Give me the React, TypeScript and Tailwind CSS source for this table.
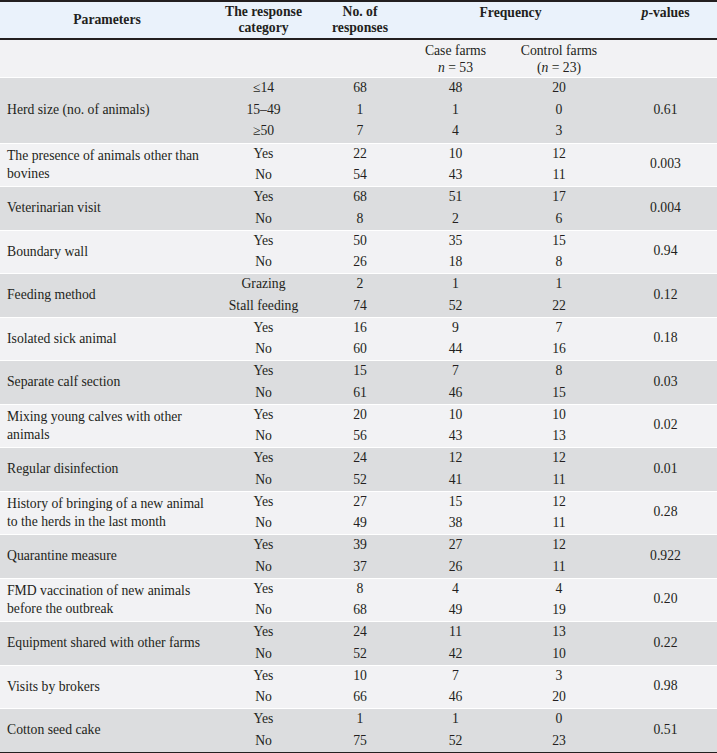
type Group = {
  param: string[];
  rows: string[][];
  p: string;
};

const groups: Group[] = [
  {
    param: ['Herd size (no. of animals)'],
    rows: [
      ['≤14', '68', '48', '20'],
      ['15–49', '1', '1', '0'],
      ['≥50', '7', '4', '3']
    ],
    p: '0.61'
  },
  {
    param: ['The presence of animals other than', 'bovines'],
    rows: [
      ['Yes', '22', '10', '12'],
      ['No', '54', '43', '11']
    ],
    p: '0.003'
  },
  {
    param: ['Veterinarian visit'],
    rows: [
      ['Yes', '68', '51', '17'],
      ['No', '8', '2', '6']
    ],
    p: '0.004'
  },
  {
    param: ['Boundary wall'],
    rows: [
      ['Yes', '50', '35', '15'],
      ['No', '26', '18', '8']
    ],
    p: '0.94'
  },
  {
    param: ['Feeding method'],
    rows: [
      ['Grazing', '2', '1', '1'],
      ['Stall feeding', '74', '52', '22']
    ],
    p: '0.12'
  },
  {
    param: ['Isolated sick animal'],
    rows: [
      ['Yes', '16', '9', '7'],
      ['No', '60', '44', '16']
    ],
    p: '0.18'
  },
  {
    param: ['Separate calf section'],
    rows: [
      ['Yes', '15', '7', '8'],
      ['No', '61', '46', '15']
    ],
    p: '0.03'
  },
  {
    param: ['Mixing young calves with other', 'animals'],
    rows: [
      ['Yes', '20', '10', '10'],
      ['No', '56', '43', '13']
    ],
    p: '0.02'
  },
  {
    param: ['Regular disinfection'],
    rows: [
      ['Yes', '24', '12', '12'],
      ['No', '52', '41', '11']
    ],
    p: '0.01'
  },
  {
    param: ['History of bringing of a new animal', 'to the herds in the last month'],
    rows: [
      ['Yes', '27', '15', '12'],
      ['No', '49', '38', '11']
    ],
    p: '0.28'
  },
  {
    param: ['Quarantine measure'],
    rows: [
      ['Yes', '39', '27', '12'],
      ['No', '37', '26', '11']
    ],
    p: '0.922'
  },
  {
    param: ['FMD vaccination of new animals', 'before the outbreak'],
    rows: [
      ['Yes', '8', '4', '4'],
      ['No', '68', '49', '19']
    ],
    p: '0.20'
  },
  {
    param: ['Equipment shared with other farms'],
    rows: [
      ['Yes', '24', '11', '13'],
      ['No', '52', '42', '10']
    ],
    p: '0.22'
  },
  {
    param: ['Visits by brokers'],
    rows: [
      ['Yes', '10', '7', '3'],
      ['No', '66', '46', '20']
    ],
    p: '0.98'
  },
  {
    param: ['Cotton seed cake'],
    rows: [
      ['Yes', '1', '1', '0'],
      ['No', '75', '52', '23']
    ],
    p: '0.51'
  }
];

const cols = 'grid grid-cols-[214px_99px_94px_97px_110px_103px]';

function GroupRows({ group, dark }: { group: Group; dark: boolean }) {
  const three = group.rows.length === 3;
  const rowH = three ? 'h-[21.5px]' : 'h-[21.25px]';
  return (
    <div className={`${cols} border-t border-white ${dark ? 'bg-[#dcdddf]' : 'bg-[#f2f2f4]'}`}>
      <div
        className={`col-start-1 row-start-1 flex flex-col justify-center pl-[7px] leading-[18px] ${
          three ? 'row-span-3' : 'row-span-2'
        }`}
      >
        {group.param.map((line) => (
          <span key={line}>{line}</span>
        ))}
      </div>
      {group.rows.map((row, i) =>
        row.map((cell, j) => (
          <div
            key={`${i}-${j}`}
            className={`${rowH} flex items-center justify-center`}
            style={{ gridColumnStart: j + 2, gridRowStart: i + 1 }}
          >
            {cell}
          </div>
        ))
      )}
      <div
        className={`col-start-6 row-start-1 flex items-center justify-center ${three ? 'row-span-3' : 'row-span-2'}`}
      >
        {group.p}
      </div>
    </div>
  );
}

export default function App() {
  return (
    <div className="w-[717px] h-[753px] overflow-hidden bg-white font-['Liberation_Serif',serif] text-[13.7px] text-[#231f20]">
      <div className="border-t-2 border-b-2 border-[#231f20]">
        <div className={`${cols} h-[36px] bg-[#eaf2fb] font-bold leading-[16px]`}>
          <div className="flex items-center justify-center">Parameters</div>
          <div className="flex flex-col items-center justify-center">
            <span>The response</span>
            <span>category</span>
          </div>
          <div className="flex flex-col items-center justify-center">
            <span>No. of</span>
            <span>responses</span>
          </div>
          <div className="col-span-2 pt-[3px] text-center">Frequency</div>
          <div className="pt-[3px] text-center">
            <i>p</i>-values
          </div>
        </div>
      </div>
      <div className={`${cols} h-[37px] bg-[#f2f2f4] leading-[17px]`}>
        <div />
        <div />
        <div />
        <div className="flex flex-col items-center justify-center">
          <span>Case farms</span>
          <span>
            <i>n</i> = 53
          </span>
        </div>
        <div className="flex flex-col items-center justify-center">
          <span>Control farms</span>
          <span>
            (<i>n</i> = 23)
          </span>
        </div>
        <div />
      </div>
      {groups.map((g, i) => (
        <GroupRows key={g.param[0]} group={g} dark={i % 2 === 0} />
      ))}
      <div className="h-[2px] bg-[#231f20]" />
    </div>
  );
}
